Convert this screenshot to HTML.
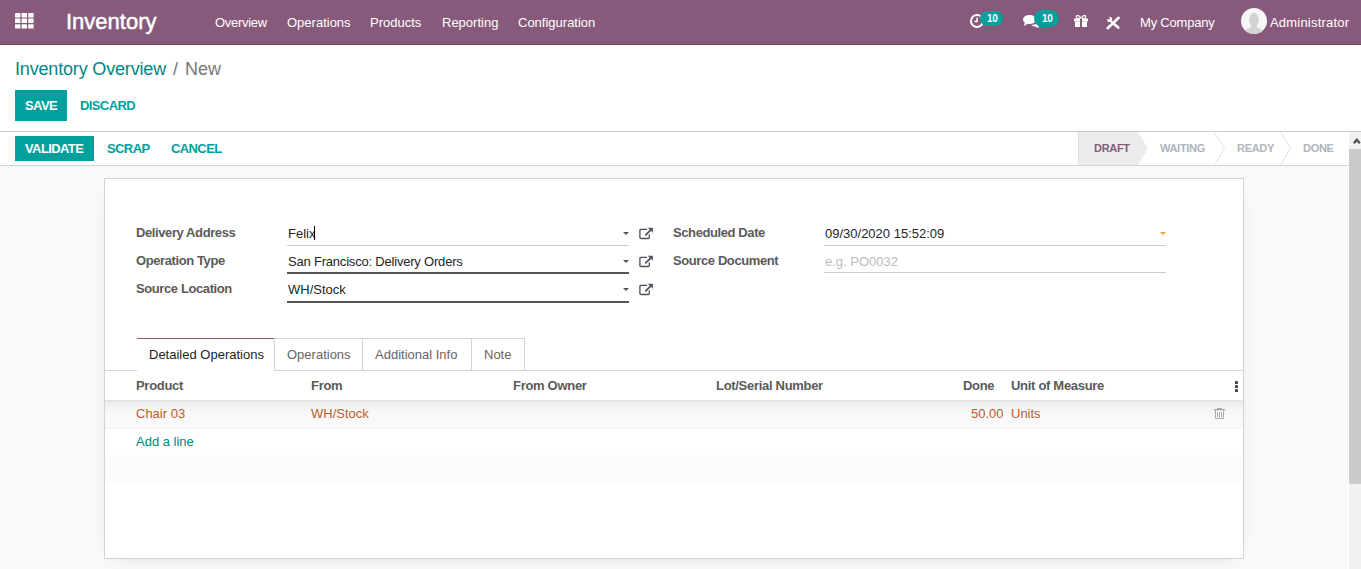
<!DOCTYPE html>
<html><head><meta charset="utf-8">
<style>
*{box-sizing:border-box;margin:0;padding:0}
html,body{width:1361px;height:569px;overflow:hidden;background:#fff;font-family:"Liberation Sans",sans-serif;font-size:13px;color:#212529}
.a{position:absolute;white-space:nowrap;line-height:1}
#nav{position:absolute;left:0;top:0;width:1361px;height:45px;background:#875A7B;border-bottom:1px solid #6f4a66}
.w{color:#fff}
.btnp{position:absolute;background:#00A09D;color:#fff}
.teal{color:#00A09D}
.lbl{font-weight:bold;letter-spacing:-0.4px;color:#5a5a5a}
.ul{position:absolute;height:1px;background:#ccc}
.ulr{position:absolute;height:2px;background:#555}
.caret{position:absolute;width:0;height:0;border-left:3px solid transparent;border-right:3px solid transparent;border-top:3px solid #555}
.bt{font-weight:bold;letter-spacing:-0.6px}
.st{font-size:11px;font-weight:bold;letter-spacing:-0.3px}
.hdr{font-weight:bold;letter-spacing:-0.3px;color:#5a5a5a}
.rowt{color:#bd5b2f}
</style></head><body>

<!-- NAVBAR -->
<div id="nav">
  <!-- apps grid -->
  <svg class="a" style="left:15px;top:13px" width="19" height="16" viewBox="0 0 19 16"><g fill="#fff"><rect x="0" y="0" width="5.4" height="4.4" rx="0.5"/><rect x="6.6" y="0" width="5.4" height="4.4" rx="0.5"/><rect x="13.2" y="0" width="5.4" height="4.4" rx="0.5"/><rect x="0" y="5.6" width="5.4" height="4.4" rx="0.5"/><rect x="6.6" y="5.6" width="5.4" height="4.4" rx="0.5"/><rect x="13.2" y="5.6" width="5.4" height="4.4" rx="0.5"/><rect x="0" y="11.2" width="5.4" height="4.4" rx="0.5"/><rect x="6.6" y="11.2" width="5.4" height="4.4" rx="0.5"/><rect x="13.2" y="11.2" width="5.4" height="4.4" rx="0.5"/></g></svg>
  <div class="a w" style="left:66px;top:11px;font-size:22px;-webkit-text-stroke:0.5px #fff">Inventory</div>
  <div class="a w" style="left:215px;top:16px;letter-spacing:-0.3px">Overview</div>
  <div class="a w" style="left:287px;top:16px">Operations</div>
  <div class="a w" style="left:370px;top:16px">Products</div>
  <div class="a w" style="left:442px;top:16px">Reporting</div>
  <div class="a w" style="left:518px;top:16px">Configuration</div>

  <!-- clock -->
  <svg class="a" style="left:970px;top:14px" width="14" height="14" viewBox="0 0 14 14">
    <circle cx="7" cy="7" r="6" fill="none" stroke="#fff" stroke-width="2"/>
    <path d="M7 3.5V7.5H4.5" fill="none" stroke="#fff" stroke-width="1.5"/>
  </svg>
  <div class="a" style="left:980px;top:11px;width:23px;height:15px;border-radius:8px;background:#00A09D"></div>
  <div class="a w" style="left:987px;top:13.5px;font-size:10px;letter-spacing:-0.2px;font-weight:bold">10</div>

  <!-- chat -->
  <svg class="a" style="left:1023px;top:15px" width="17" height="13" viewBox="0 0 17 13">
    <ellipse cx="6.5" cy="4.5" rx="6.5" ry="4.5" fill="#fff"/>
    <path d="M2 7 L1 11 L6 8Z" fill="#fff"/>
    <path d="M8 10 Q12 10 14 8 L16 13 L10 11Z" fill="#fff"/>
  </svg>
  <div class="a" style="left:1034px;top:10px;width:25px;height:17px;border-radius:9px;background:#00A09D"></div>
  <div class="a w" style="left:1042px;top:13.5px;font-size:10px;letter-spacing:-0.2px;font-weight:bold">10</div>

  <!-- gift -->
  <svg class="a" style="left:1074px;top:15px" width="14" height="12" viewBox="0 0 14 12">
    <path d="M3 0.5 Q5 0 7 3.5 Q9 0 11 0.5 Q12.5 2 10.5 3.5 L3.5 3.5 Q1.5 2 3 0.5Z" fill="none" stroke="#fff" stroke-width="1.2"/>
    <rect x="0" y="3.5" width="14" height="3" fill="#fff"/>
    <rect x="1" y="6.5" width="12" height="5.5" fill="#fff"/>
    <rect x="6" y="3.5" width="2" height="8.5" fill="#875A7B"/>
  </svg>

  <!-- tools -->
  <svg class="a" style="left:1106px;top:16px" width="14" height="14" viewBox="0 0 14 14">
    <path d="M1.7 12.2L12.6 1.8" stroke="#fff" stroke-width="2.6" stroke-linecap="round"/>
    <path d="M6.2 6.4L12.2 11.6" stroke="#fff" stroke-width="2.6" stroke-linecap="round"/>
    <circle cx="3.6" cy="3.4" r="2.6" fill="#fff"/>
    <circle cx="2.4" cy="2.2" r="1.4" fill="#875A7B"/>
  </svg>

  <div class="a w" style="left:1140px;top:16px;letter-spacing:-0.2px">My Company</div>
  <!-- avatar -->
  <svg class="a" style="left:1241px;top:8px" width="26" height="26" viewBox="0 0 26 26">
    <defs><clipPath id="cc"><circle cx="13" cy="13" r="13"/></clipPath></defs>
    <circle cx="13" cy="13" r="13" fill="#f6f6f6"/>
    <g clip-path="url(#cc)" fill="#d2d2d2">
      <ellipse cx="13" cy="11.8" rx="4.8" ry="7"/><rect x="10" y="15" width="6" height="6" fill="#d2d2d2"/>
      <ellipse cx="13" cy="27" rx="11.5" ry="7.5"/>
    </g>
  </svg>
  <div class="a w" style="left:1270px;top:16px;letter-spacing:0.2px">Administrator</div>
</div>

<!-- CONTROL PANEL -->
<div class="a" style="left:15px;top:60px;font-size:18px;letter-spacing:-0.17px;color:#008784">Inventory Overview</div>
<div class="a" style="left:173px;top:60px;font-size:18px;color:#777">/</div>
<div class="a" style="left:185px;top:60px;font-size:18px;color:#777">New</div>

<div class="btnp" style="left:15px;top:90px;width:52px;height:31px"></div>
<div class="a w bt" style="left:25px;top:99px">SAVE</div>
<div class="a teal bt" style="left:80px;top:99px">DISCARD</div>

<div class="a" style="left:0;top:131px;width:1361px;height:1px;background:#ccc"></div>

<!-- STATUSBAR -->
<div class="btnp" style="left:15px;top:136px;width:79px;height:25px"></div>
<div class="a w bt" style="left:25px;top:142px">VALIDATE</div>
<div class="a teal bt" style="left:107px;top:142px">SCRAP</div>
<div class="a teal bt" style="left:171px;top:142px">CANCEL</div>

<svg class="a" style="left:1078px;top:132px" width="271" height="33" viewBox="0 0 271 33">
  <path d="M0 0 H60 L70 16.5 L60 33 H0Z" fill="#eaeced"/><path d="M0.5 0V33" stroke="#dee2e6" stroke-width="1"/>
  <path d="M136 0 L146.5 16.5 L136 33" fill="none" stroke="#dee2e6" stroke-width="1"/>
  <path d="M202.5 0 L212.5 16.5 L202.5 33" fill="none" stroke="#dee2e6" stroke-width="1"/>
</svg>
<div class="a st" style="left:1094px;top:143px;color:#875A7B">DRAFT</div>
<div class="a st" style="left:1160px;top:143px;color:#adb5bd">WAITING</div>
<div class="a st" style="left:1237px;top:143px;color:#adb5bd">READY</div>
<div class="a st" style="left:1303px;top:143px;color:#adb5bd">DONE</div>

<div class="a" style="left:0;top:165px;width:1349px;height:1px;background:#ced4da"></div>
<div class="a" style="left:0;top:166px;width:1349px;height:403px;background:#f9f9f9"></div>

<!-- SHEET -->
<div class="a" style="left:104px;top:178px;width:1140px;height:381px;background:#fff;border:1px solid #ced4da;box-shadow:0 5px 20px -15px rgba(0,0,0,.4)"></div>

<!-- left group -->
<div class="a lbl" style="left:136px;top:226px">Delivery Address</div>
<div class="a lbl" style="left:136px;top:254px">Operation Type</div>
<div class="a lbl" style="left:136px;top:282px">Source Location</div>

<div class="a" style="left:288px;top:227px">Felix</div>
<div class="a" style="left:314px;top:226px;width:1px;height:14px;background:#000"></div>
<div class="ul" style="left:287px;top:245px;width:342px"></div>
<div class="caret" style="left:623px;top:232px"></div>

<div class="a" style="left:288px;top:255px;letter-spacing:-0.2px">San Francisco: Delivery Orders</div>
<div class="ulr" style="left:287px;top:272px;width:342px"></div>
<div class="caret" style="left:623px;top:260px"></div>

<div class="a" style="left:288px;top:283px">WH/Stock</div>
<div class="ulr" style="left:287px;top:301px;width:342px"></div>
<div class="caret" style="left:623px;top:288px"></div>

<!-- external link icons -->
<svg class="a" style="left:638px;top:226px" width="16" height="14" viewBox="0 0 16 14"><path d="M9 3.3H3Q1.9 3.3 1.9 4.4V11.4Q1.9 12.5 3 12.5H10.2Q11.3 12.5 11.3 11.4V8.4" fill="none" stroke="#4d4d5c" stroke-width="1.3"/><path d="M7.3 9.4L12.6 4.1" stroke="#4d4d5c" stroke-width="1.7"/><path d="M9.8 1.8H14.8V6.8Z" fill="#4d4d5c"/></svg>
<svg class="a" style="left:638px;top:254px" width="16" height="14" viewBox="0 0 16 14"><path d="M9 3.3H3Q1.9 3.3 1.9 4.4V11.4Q1.9 12.5 3 12.5H10.2Q11.3 12.5 11.3 11.4V8.4" fill="none" stroke="#4d4d5c" stroke-width="1.3"/><path d="M7.3 9.4L12.6 4.1" stroke="#4d4d5c" stroke-width="1.7"/><path d="M9.8 1.8H14.8V6.8Z" fill="#4d4d5c"/></svg>
<svg class="a" style="left:638px;top:282px" width="16" height="14" viewBox="0 0 16 14"><path d="M9 3.3H3Q1.9 3.3 1.9 4.4V11.4Q1.9 12.5 3 12.5H10.2Q11.3 12.5 11.3 11.4V8.4" fill="none" stroke="#4d4d5c" stroke-width="1.3"/><path d="M7.3 9.4L12.6 4.1" stroke="#4d4d5c" stroke-width="1.7"/><path d="M9.8 1.8H14.8V6.8Z" fill="#4d4d5c"/></svg>

<!-- right group -->
<div class="a lbl" style="left:673px;top:226px">Scheduled Date</div>
<div class="a lbl" style="left:673px;top:254px">Source Document</div>
<div class="a" style="left:825px;top:227px">09/30/2020 15:52:09</div>
<div class="ul" style="left:824px;top:245px;width:342px"></div>
<div class="caret" style="left:1160px;top:232px;border-top-color:#ec9a3c"></div>
<div class="a" style="left:825px;top:255px;color:#bbb">e.g. PO0032</div>
<div class="ul" style="left:824px;top:272px;width:342px"></div>

<!-- TABS -->
<div class="a" style="left:105px;top:370px;width:1138px;height:1px;background:#ced4da"></div>
<div class="a" style="left:137px;top:338px;width:138px;height:33px;background:#fff;border-top:1px solid #875A7B;border-right:1px solid #ced4da"></div>
<div class="a" style="left:274px;top:338px;width:251px;height:33px;border:1px solid #ced4da;border-left:none"></div>
<div class="a" style="left:362px;top:338px;width:1px;height:33px;background:#ced4da"></div>
<div class="a" style="left:471px;top:338px;width:1px;height:33px;background:#ced4da"></div>
<div class="a" style="left:149px;top:348px">Detailed Operations</div>
<div class="a" style="left:287px;top:348px;color:#666">Operations</div>
<div class="a" style="left:375px;top:348px;color:#666">Additional Info</div>
<div class="a" style="left:484px;top:348px;color:#666">Note</div>

<!-- LIST -->
<div class="a hdr" style="left:136px;top:379px">Product</div>
<div class="a hdr" style="left:311px;top:379px">From</div>
<div class="a hdr" style="left:513px;top:379px">From Owner</div>
<div class="a hdr" style="left:716px;top:379px">Lot/Serial Number</div>
<div class="a hdr" style="left:963px;top:379px">Done</div>
<div class="a hdr" style="left:1011px;top:379px">Unit of Measure</div>
<div class="a" style="left:1235px;top:381px;width:2.5px;height:2.5px;background:#4a4a4a;border-radius:0.5px"></div><div class="a" style="left:1235px;top:385px;width:2.5px;height:2.5px;background:#4a4a4a;border-radius:0.5px"></div><div class="a" style="left:1235px;top:389px;width:2.5px;height:2.5px;background:#4a4a4a;border-radius:0.5px"></div>

<div class="a" style="left:105px;top:400px;width:1138px;height:1px;background:#dee2e6"></div>
<div class="a" style="left:105px;top:401px;width:1138px;height:27px;background:linear-gradient(#eaeaea,#f4f4f4 25%,#f9f9f9 55%)"></div>
<div class="a rowt" style="left:136px;top:407px">Chair 03</div>
<div class="a rowt" style="left:311px;top:407px">WH/Stock</div>
<div class="a rowt" style="left:971px;top:407px">50.00</div>
<div class="a rowt" style="left:1011px;top:407px">Units</div>
<svg class="a" style="left:1214px;top:408px" width="11" height="12" viewBox="0 0 11 12"><g fill="#aaa"><rect x="3" y="0" width="5" height="1"/><rect x="0" y="1" width="11" height="1.4"/><rect x="3" y="4" width="1" height="5"/><rect x="5" y="4" width="1" height="5"/><rect x="7" y="4" width="1" height="5"/></g><path d="M1.5 2.4V10.5H9.5V2.4" fill="none" stroke="#aaa" stroke-width="1"/></svg>

<div class="a" style="left:105px;top:428px;width:1138px;height:1px;background:#f3f3f3"></div>
<div class="a" style="left:136px;top:435px;color:#008784">Add a line</div>
<div class="a" style="left:105px;top:455px;width:1138px;height:27px;background:#fbfbfb"></div>

<!-- SCROLLBAR -->
<div class="a" style="left:1348px;top:166px;width:1px;height:403px;background:#fff"></div>
<div class="a" style="left:1349px;top:132px;width:12px;height:437px;background:#f1f1f1"></div>
<div class="a" style="left:1349px;top:149px;width:12px;height:335px;background:#cbcbcb"></div>
<svg class="a" style="left:1349px;top:134px" width="12" height="12" viewBox="0 0 12 12"><path d="M4.8 9.3L7.8 5.8L10.8 9.3" fill="none" stroke="#505050" stroke-width="2.2"/></svg>

</body></html>
